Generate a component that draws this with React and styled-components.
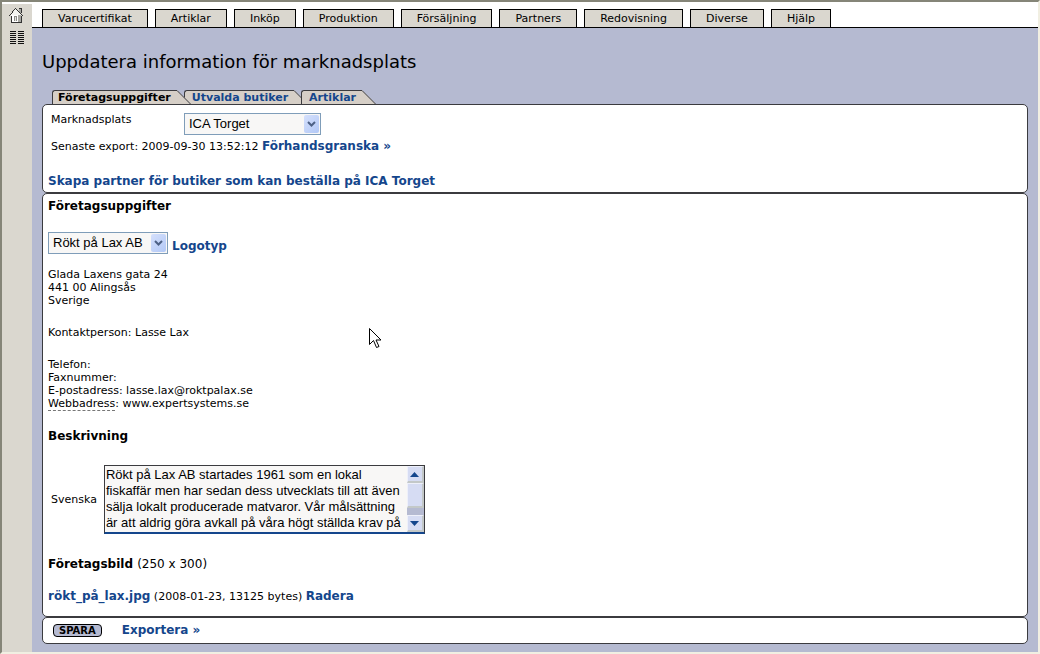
import React from "react";
import styled, { createGlobalStyle } from "styled-components";

const menuItems = [
    "Varucertifikat",
    "Artiklar",
    "Inköp",
    "Produktion",
    "Försäljning",
    "Partners",
    "Redovisning",
    "Diverse",
    "Hjälp",
];

const description =
    "Rökt på Lax AB startades 1961 som en lokal\n" +
    "fiskaffär men har sedan dess utvecklats till att även\n" +
    "sälja lokalt producerade matvaror. Vår målsättning\n" +
    "är att aldrig göra avkall på våra högt ställda krav på";

const HomeIcon = () => (
    <svg width="16" height="16" viewBox="0 0 16 16" shapeRendering="crispEdges" aria-hidden="true">
        {/* walls and chimney */}
        <path d="M2 7h8v7H2z" fill="#fff" />
        <path d="M9 5h3v9H9zM10 0h2v5h-2z" fill="#a9a9a4" />
        <path d="M5 8h3v5H5z" fill="#8c8c88" />
        <path d="M6 9h1v4H6z" fill="#e6e6e2" />
        {/* roof */}
        <path d="M6 1h1v1h1v1h1v1h1v1h1v1h1v1H2V6h1V5h1V4h1V2h1z" fill="#f4f4f0" />
        <path
            d="M6 0h1v1H6zM5 1h1v1H5zM7 1h1v1H7zM4 2h1v1H4zM8 2h1v1H8zM3 3h1v1H3zM9 3h1v1H9zM3 4h1v1H3zM10 4h1v1h-1zM2 5h1v1H2zM11 5h1v1h-1zM1 6h1v1H1zM12 6h1v1h-1zM0 7h1v1H0zM13 7h1v1h-1z"
            fill="#333"
        />
        {/* outline */}
        <path d="M2 8h1v6H2zM12 8h1v6h-1zM2 14h11v1H2zM12 0h1v5h-1zM10 0h2v1h-2z" fill="#333" />
    </svg>
);

const ListIcon = () => (
    <svg width="16" height="14" viewBox="0 0 16 14" shapeRendering="crispEdges" aria-hidden="true">
        <path
            d="M1 .5h6M9 .5h6M1 2.500h6M9 2.500h6M1 4.500h6M9 4.500h6M1 6.500h6M9 6.500h6M1 8.500h6M9 8.500h6M1 10.500h6M9 10.500h6M1 12.500h6M9 12.500h6"
            stroke="#111"
        />
    </svg>
);

const Slant = () => (
    <svg width="14" height="14" viewBox="0 0 14 14" aria-hidden="true">
        <path d="M0 0L14 14H0z" fill="#d6cfc7" />
        <path d="M0 .5L13.5 14" stroke="#3b3b3f" fill="none" />
    </svg>
);

const Chevron = () => (
    <svg width="9" height="6" viewBox="0 0 9 6" aria-hidden="true">
        <path d="M1 1l3.500 3.500L8 1" stroke="#4d6185" strokeWidth="2" fill="none" />
    </svg>
);

const Select = ({ label, value }) => (
    <SelectBox>
        <select aria-label={label} defaultValue={value}>
            <option>{value}</option>
        </select>
        <SelectArrow>
            <Chevron />
        </SelectArrow>
    </SelectBox>
);

const App = () => {
    return (
        <>
            <GlobalStyle />
            <Frame>
                <Sidebar>
                    <a href="#hem" aria-label="Hem"><HomeIcon /></a>
                    <a href="#lista" aria-label="Lista"><ListIcon /></a>
                </Sidebar>
                <Content>
                    <Menu>
                        {menuItems.map((item) => (
                            <MenuButton type="button" key={item}>{item}</MenuButton>
                        ))}
                    </Menu>
                    <Main>
                        <Title>Uppdatera information för marknadsplats</Title>
                        <Tabs>
                            <Tab href="#uppgifter" $active><span>Företagsuppgifter</span><Slant /></Tab>
                            <Tab href="#butiker"><span>Utvalda butiker</span><Slant /></Tab>
                            <Tab href="#artiklar"><span>Artiklar</span><Slant /></Tab>
                        </Tabs>

                        {/* Marketplace */}
                        <Panel>
                            <MarketRow>
                                <span>Marknadsplats</span>
                                <Select label="Marknadsplats" value="ICA Torget" />
                            </MarketRow>
                            <ExportRow>
                                Senaste export: 2009-09-30 13:52:12 <Link href="#granska">Förhandsgranska »</Link>
                            </ExportRow>
                            <Link href="#partner">Skapa partner för butiker som kan beställa på ICA Torget</Link>
                        </Panel>

                        {/* Company details */}
                        <DetailsPanel>
                            <Heading>Företagsuppgifter</Heading>
                            <CompanyRow>
                                <Select label="Företag" value="Rökt på Lax AB" />
                                <Link href="#logotyp">Logotyp</Link>
                            </CompanyRow>
                            <Lines>
                                <p>Glada Laxens gata 24<br />441 00 Alingsås<br />Sverige</p>
                                <p>Kontaktperson: Lasse Lax</p>
                                <p>
                                    Telefon:<br />Faxnummer:<br />E-postadress: lasse.lax@roktpalax.se<br />
                                    <Dashed>Webbadress</Dashed>: www.expertsystems.se
                                </p>
                            </Lines>
                            <Heading>Beskrivning</Heading>
                            <DescriptionRow>
                                <label htmlFor="svenska">Svenska</label>
                                <TextBox>
                                    <textarea id="svenska" rows={4} defaultValue={description} />
                                    <ScrollBar>
                                        <ScrollButton type="button" aria-label="Upp">
                                            <svg width="9" height="5" viewBox="0 0 9 5"><path d="M0 5L4.500 0L9 5z" fill="#14468c" /></svg>
                                        </ScrollButton>
                                        <ScrollThumb />
                                        <ScrollButton type="button" aria-label="Ned">
                                            <svg width="9" height="5" viewBox="0 0 9 5"><path d="M0 0L4.500 5L9 0z" fill="#14468c" /></svg>
                                        </ScrollButton>
                                    </ScrollBar>
                                </TextBox>
                            </DescriptionRow>
                            <Heading>Företagsbild <span>(250 x 300)</span></Heading>
                            <FileRow>
                                <Link href="#bild">rökt_på_lax.jpg</Link> (2008-01-23, 13125 bytes) <Link href="#radera">Radera</Link>
                            </FileRow>
                        </DetailsPanel>

                        {/* Actions */}
                        <ActionPanel>
                            <SaveButton type="button">SPARA</SaveButton>
                            <Link href="#exportera">Exportera »</Link>
                        </ActionPanel>
                    </Main>
                </Content>
                <Pointer width="13" height="21" viewBox="0 0 13 21" aria-hidden="true">
                    <path d="M.5 .5V16.500L4.500 12.500L7.500 19.500L10 18.500L7 12H12z" fill="#fff" stroke="#000" />
                </Pointer>
            </Frame>
        </>
    );
};

export default App;

const GlobalStyle = createGlobalStyle`
  * {
    box-sizing: border-box;
  }

  body {
    margin: 0;
    background: #fff;
    color: #000;
    font: 11px/13px "DejaVu Sans", Verdana, sans-serif;
  }

  button, select, textarea {
    margin: 0;
    border-radius: 0;
    color: inherit;
  }

  svg {
    display: block;
  }
`;

const Frame = styled.div`
  position: relative;
  display: flex;
  min-height: 100vh;
  border: 2px solid #f1efe2;
  border-top-color: #858578;
  border-left-color: #858578;
`;

const Sidebar = styled.nav`
  display: flex;
  flex-direction: column;
  align-items: center;
  gap: 7px;
  flex: 0 0 30px;
  margin-top: 2px;
  padding-top: 4px;
  background: #dad7cf;
`;

const Content = styled.div`
  display: flex;
  flex-direction: column;
  flex: 1;
  min-width: 0;
`;

const Menu = styled.nav`
  display: flex;
  align-items: flex-end;
  gap: 7px;
  height: 26px;
  padding-left: 10px;
  border-bottom: 1px solid #000;
`;

const MenuButton = styled.button`
  height: 18px;
  padding: 0 15px;
  border: 1px solid #000;
  border-bottom: 0;
  background: #dad7cf;
  font: 11px/16px "DejaVu Sans", Verdana, sans-serif;
`;

const Main = styled.main`
  flex: 1;
  padding: 24px 10px 7px;
  background: #b5bad1;
`;

const Title = styled.h1`
  margin: 0;
  font-size: 18px;
  font-weight: normal;
  line-height: 20px;
`;

const Tabs = styled.nav`
  display: flex;
  margin-top: 18px;
  padding-left: 10px;
`;

const Tab = styled.a`
  position: relative;
  z-index: ${({ $active }) => ($active ? 2 : 1)};
  display: flex;
  color: ${({ $active }) => ($active ? "#000" : "#14468c")};
  font-weight: bold;
  text-decoration: none;

  & + & {
    margin-left: -7px;
  }

  span {
    height: 14px;
    padding: 0 6px 0 ${({ $active }) => ($active ? "5px" : "7px")};
    border: solid #3b3b3f;
    border-width: 1px 0 0 1px;
    border-top-left-radius: 3px;
    background: #d6cfc7;
    line-height: 14px;
  }
`;

const Panel = styled.section`
  padding: 8px 5px 4px;
  border: 1px solid #3b3b3f;
  border-radius: 5px;
  background: #fff;
`;

const DetailsPanel = styled(Panel)`
  padding: 5px 5px 13px;
`;

const ActionPanel = styled(Panel)`
  display: flex;
  align-items: center;
  gap: 20px;
  padding: 6px 10px;
`;

const Link = styled.a`
  color: #14468c;
  font-size: 12px;
  font-weight: bold;
  text-decoration: none;
`;

const MarketRow = styled.div`
  display: grid;
  grid-template-columns: 133px 137px;
  padding-left: 3px;
`;

const ExportRow = styled.p`
  margin: 5px 0 22px;
  padding-left: 3px;
`;

const SelectBox = styled.div`
  display: inline-grid;
  align-items: center;
  height: 22px;
  border: 1px solid #7f9db9;
  background: #f8f7f6;

  select {
    grid-area: 1 / 1;
    height: 20px;
    padding: 0 23px 0 4px;
    border: 0;
    appearance: none;
    background: transparent;
    font: 13px/20px "Liberation Sans", Arial, sans-serif;
  }
`;

const SelectArrow = styled.span`
  grid-area: 1 / 1;
  justify-self: end;
  display: grid;
  place-items: center;
  width: 15px;
  height: 18px;
  margin-right: 1px;
  border-radius: 2px;
  background: linear-gradient(135deg, #d5e0fc, #b2c8f6);
  pointer-events: none;
`;

const Heading = styled.h2`
  margin: 0;
  font-size: 12px;
  line-height: 15px;

  span {
    font-weight: normal;
  }
`;

const CompanyRow = styled.div`
  display: flex;
  align-items: flex-end;
  gap: 4px;
  margin: 18px 0 14px;
  line-height: 15px;
`;

const Lines = styled.div`
  p {
    margin: 0 0 19px;
  }
`;

const Dashed = styled.span`
  border-bottom: 1px dashed #777;
`;

const DescriptionRow = styled.div`
  display: flex;
  align-items: center;
  gap: 7px;
  margin: 21px 0 23px;
  padding-left: 3px;
`;

const TextBox = styled.div`
  display: flex;
  width: 321px;
  height: 69px;
  border: 1px solid #3b3b3f;
  border-bottom: 2px solid #14468c;
  background: #f8f7f6;

  textarea {
    flex: 1;
    min-width: 0;
    padding: 1px;
    border: 0;
    resize: none;
    overflow: hidden;
    background: transparent;
    font: 13px/16px "Liberation Sans", Arial, sans-serif;
    white-space: pre;
  }
`;

const ScrollBar = styled.div`
  display: flex;
  flex-direction: column;
  justify-content: space-between;
  width: 17px;
  background: #b5bad1;
`;

const ScrollButton = styled.button`
  display: grid;
  place-items: center;
  height: 17px;
  padding: 0;
  border: 1px solid #eef0fa;
  border-right: 2px solid #c3c8c8;
  border-bottom: 2px solid #c3c8c8;
  background: #d6dcf3;
`;

const ScrollThumb = styled.div`
  height: 25px;
  margin-bottom: 7px;
  border: 1px solid #eef0fa;
  border-right: 2px solid #c3c8c8;
  border-bottom: 2px solid #c3c8c8;
  background: #d6dcf3;
`;

const FileRow = styled.p`
  margin: 18px 0 0;
`;

const SaveButton = styled.button`
  height: 13px;
  padding: 0 5px;
  border: 1px solid #000;
  border-radius: 4px;
  background: #b5bad1;
  font: bold 10px/11px "DejaVu Sans", Verdana, sans-serif;
`;

/* mouse pointer lying over the page */
const Pointer = styled.svg`
  position: absolute;
  top: 326px;
  left: 367px;
  pointer-events: none;
`;
